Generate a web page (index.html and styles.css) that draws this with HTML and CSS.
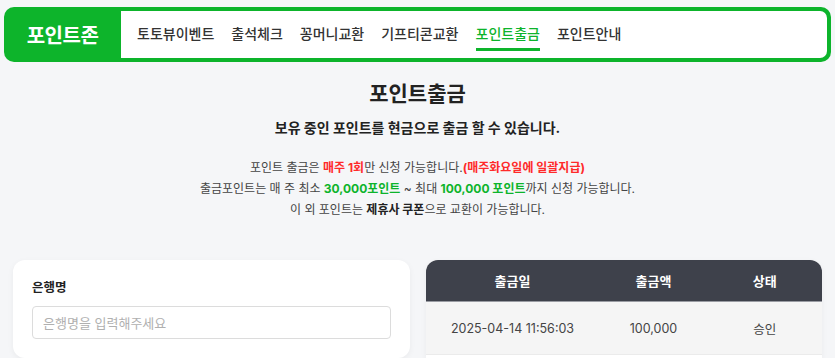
FILE: index.html
```html
<!DOCTYPE html>
<html lang="ko">
<head>
    <meta charset="UTF-8">
    <meta name="viewport" content="width=device-width, initial-scale=1.0">
    <title>포인트출금</title>
    <link rel="stylesheet" href="styles.css">
</head>
<body>
<div class="header">
    <div class="logo">포인트존</div>
    <ul class="nav">
        <li><a href="#">토토뷰이벤트</a></li>
        <li><a href="#">출석체크</a></li>
        <li><a href="#">꽁머니교환</a></li>
        <li><a href="#">기프티콘교환</a></li>
        <li><a href="#" class="active">포인트출금</a></li>
        <li><a href="#">포인트안내</a></li>
    </ul>
</div>

<div class="intro">
    <h1>포인트출금</h1>
    <p class="sub">보유 중인 포인트를 현금으로 출금 할 수 있습니다.</p>
    <div class="info">
        <p>포인트 출금은 <b class="red">매주 1회</b>만 신청 가능합니다.<b class="red">(매주화요일에 일괄지급)</b></p>
        <p>출금포인트는 매 주 최소 <b class="green">30,000포인트</b> ~ 최대 <b class="green">100,000 포인트</b>까지 신청 가능합니다.</p>
        <p>이 외 포인트는 <b>제휴사 쿠폰</b>으로 교환이 가능합니다.</p>
    </div>
</div>

<div class="container">
    <div class="card form">
        <label for="bank">은행명</label>
        <input id="bank" placeholder="은행명을 입력해주세요"/>
    </div>
    <div class="card list">
        <div class="row head">
            <div>출금일</div>
            <div>출금액</div>
            <div>상태</div>
        </div>
        <div class="row">
            <div>2025-04-14 11:56:03</div>
            <div>100,000</div>
            <div>승인</div>
        </div>
    </div>
</div>
</body>
</html>
```
FILE: styles.css
```css
* {
    margin: 0;
    padding: 0;
    box-sizing: border-box;
}

html, body {
    width: 100%;
    height: 100%;
    overflow: hidden;
}

body {
    background: #f5f6f8;
    font-family: "Inter", "Noto Sans CJK KR", sans-serif;
    color: #333;
}

.header {
    display: flex;
    height: 55px;
    margin: 7px 4px 0;
    padding: 4px 4px 4px 0;
    background: #0db42b;
    border-radius: 10px;
}

.logo {
    width: 117px;
    display: flex;
    align-items: center;
    justify-content: center;
    color: #fff;
    font-size: 20px;
    font-weight: 700;
    letter-spacing: -0.5px;
}

.nav {
    flex: 1;
    display: flex;
    align-items: center;
    gap: 17px;
    padding-left: 16px;
    background: #fff;
    border-radius: 0 7px 7px 0;
    list-style: none;
}

.nav a {
    display: block;
    padding: 6px 0 4px;
    border-bottom: 3px solid transparent;
    color: #333;
    font-size: 14px;
    font-weight: 500;
    line-height: 20px;
    text-decoration: none;
}

.nav a.active {
    color: #0db42b;
    border-bottom-color: #0db42b;
}

.intro {
    text-align: center;
}

h1 {
    margin-top: 18px;
    font-size: 21px;
    line-height: 28px;
    font-weight: 700;
    color: #222;
}

.sub {
    margin-top: 10px;
    font-size: 14px;
    line-height: 20px;
    font-weight: 700;
    color: #222;
}

.info {
    margin-top: 19px;
    font-size: 12px;
    line-height: 21px;
    color: #444;
}

.info b {
    color: #222;
}

.info .red {
    color: #ff2a2a;
}

.info .green {
    color: #0db42b;
}

.container {
    display: grid;
    grid-template-columns: 1fr 1fr;
    gap: 16px;
    margin: 40px 13px 0;
}

.card {
    min-width: 0;
    background: #fff;
    border-radius: 12px;
    box-shadow: 0 2px 6px rgba(0, 0, 0, 0.05);
}

.form {
    padding: 19px 19px;
}

.form label {
    display: block;
    font-size: 12.5px;
    line-height: 18px;
    font-weight: 700;
    color: #222;
}

.form input {
    display: block;
    width: 100%;
    height: 33px;
    margin-top: 9px;
    padding: 0 10px;
    border: 1px solid #dcdcdc;
    border-radius: 4px;
    font-family: inherit;
    font-size: 13px;
    color: #333;
}

.form input::placeholder {
    color: #b0b0b0;
}

.list {
    overflow: hidden;
    border-radius: 12px 12px 0 0;
}

.row {
    display: grid;
    grid-template-columns: 174px 108px 1fr;
    height: 53px;
    align-items: center;
    text-align: center;
    font-size: 12.5px;
    color: #444;
    background: #f5f5f5;
    border-bottom: 1px solid #ebebeb;
}

.row.head {
    height: 42px;
    font-size: 13px;
    background: #3e414b;
    color: #fff;
    font-weight: 700;
    border-bottom: 1px solid #9a9ca3;
}
```
